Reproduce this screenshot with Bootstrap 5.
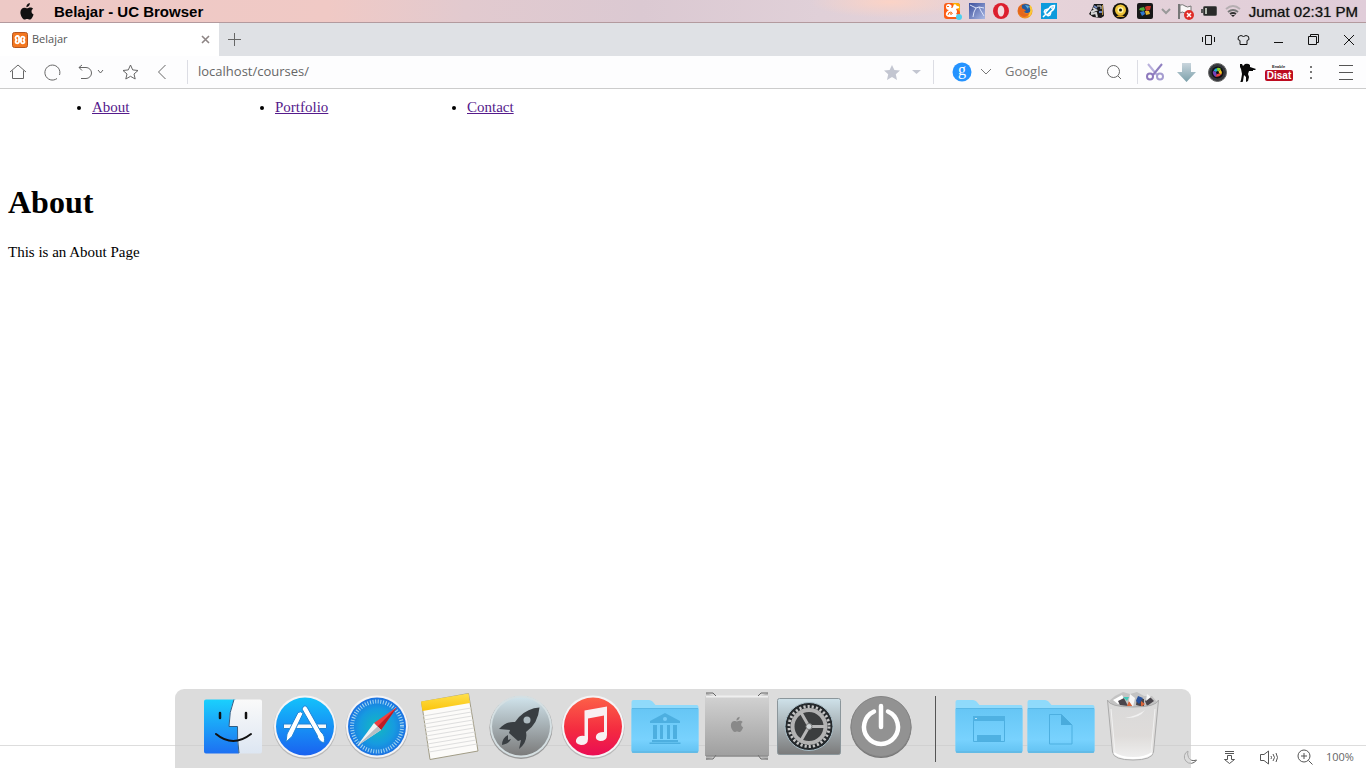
<!DOCTYPE html>
<html lang="id">
<head>
<meta charset="utf-8">
<meta name="viewport" content="width=device-width, initial-scale=1">
<title>Belajar</title>
<link rel="stylesheet" href="https://cdn.jsdelivr.net/npm/bootstrap@5.3.0/dist/css/bootstrap.min.css">
<style>
  body { font-family: "Open Sans", "Noto Sans", sans-serif; background: #fff; color: #555; }
  svg { display: block; flex: none; }
  .slot { display: flex; align-items: center; justify-content: center; flex: none; padding: 0; border: 0; background: none; color: #555; border-radius: 0; }
  .w-18 { width: 18px; } .w-20 { width: 20px; } .w-22 { width: 22px; } .w-24 { width: 24px; } .w-28 { width: 28px; }
  .w-30 { width: 30px; } .w-34 { width: 34px; } .w-40 { width: 40px; } .w-44 { width: 44px; }

  .menubar { height: 23px; border-bottom: 1px solid #b39a9e; font: 15px "Liberation Sans", sans-serif; color: #111;
    background: radial-gradient(ellipse 80px 16px at 890px 2px, #fbd3c6, #fbd3c600), linear-gradient(90deg, #edc9c6 0, #f0c9c5 24%, #e2cacf 34%, #dbc9d2 47%, #e0d0d8 60%, #e6d3d9 76%, #e0cdd9 100%); }
  .menubar .logo { color: #111; margin-left: 19px; }
  .menubar .title { color: #000; margin-left: 19px; }
  .menubar .clock { text-shadow: 0 0 1px #555; margin: 0 8px 0 4px; }

  .tabstrip { height: 33px; background: #dfe1e5; }
  .tab { width: 219px; height: 33px; background: #fff; padding: 0 5px 0 12px; font-size: 11px; }
  .winbtn { width: 35px; height: 33px; color: #111; }

  .toolbar { height: 33px; border-bottom: 1px solid #ccc; background: #fdfdfe; padding-left: 1px; }
  .sep { width: 1px; height: 24px; background: #dcdde4; flex: none; }
  .sep-address { margin: 0 10px; }
  .sep-search { margin: 0 13px 0 7px; }
  .field { border: 0; background: none; outline: 0; padding: 0; min-width: 0; font-size: 13px; color: #666; }
  .field::placeholder { color: #777; opacity: 1; }
  .search { width: 94px; margin-left: 10px; }

  .page { font-family: "Liberation Serif", serif; font-size: 15px; line-height: 18px; color: #000; padding: 9px 8px; }
  .page ul { display: grid; grid-template-columns: 183px 192px auto; padding-left: 84px; margin-bottom: 68px; }
  .page a { color: #551a8b; }
  .page h1 { font-size: 32px; font-weight: 700; line-height: 36px; margin-bottom: 23px; color: #000; }

  .status { height: 23px; border-top: 1px solid #ddd; font-size: 11px; }
  .status .action { width: 39px; }
  .status .zoom { width: 44px; text-align: left; padding: 0 0 0 4px; border: 0; background: none; color: #666; }

  .dock { background: rgba(204,204,204,.68); border-radius: 9px 9px 0 0; padding: 0 22px; height: 79px; }
  .dock .slot { width: 72px; height: 79px; }
  .dock .split { width: 36px; height: 79px; display: flex; align-items: center; justify-content: center; }
  .dock .split span { width: 1px; height: 66px; background: #555; }
</style>
</head>
<body class="d-flex flex-column min-vh-100 position-relative">
<svg width="0" height="0" class="position-absolute" aria-hidden="true">
  <defs>
    <linearGradient id="gFinder" x2="0" y2="1"><stop stop-color="#1ad0fd"/><stop offset="1" stop-color="#1d70f2"/></linearGradient>
    <linearGradient id="gFace" x2="0" y2="1"><stop stop-color="#fafafa"/><stop offset="1" stop-color="#dde6f2"/></linearGradient>
    <linearGradient id="gStore" x2="0" y2="1"><stop stop-color="#13c2fb"/><stop offset="1" stop-color="#1a62f0"/></linearGradient>
    <radialGradient id="gSafari"><stop stop-color="#12b9bf"/><stop offset=".6" stop-color="#169be0"/><stop offset="1" stop-color="#1c72e2"/></radialGradient>
    <linearGradient id="gYellow" x2="0" y2="1"><stop stop-color="#fee04c"/><stop offset="1" stop-color="#fbc40c"/></linearGradient>
    <linearGradient id="gSteel" x2="0" y2="1"><stop stop-color="#cfe2ea"/><stop offset="1" stop-color="#7b7b7b"/></linearGradient>
    <linearGradient id="gMusic" x2="0" y2="1"><stop stop-color="#fc6048"/><stop offset=".55" stop-color="#f42c40"/><stop offset="1" stop-color="#ea0d54"/></linearGradient>
    <linearGradient id="gFolder" x2="0" y2="1"><stop stop-color="#66c6f5"/><stop offset=".7" stop-color="#78d2fe"/><stop offset="1" stop-color="#62c2f2"/></linearGradient>
    <linearGradient id="gMac" x2="0" y2="1"><stop stop-color="#d2d2d2"/><stop offset="1" stop-color="#9f9f9f"/></linearGradient>
    <linearGradient id="gBin" x2="0" y2="1"><stop stop-color="#d9d9d9"/><stop offset=".6" stop-color="#dfdcda"/><stop offset="1" stop-color="#f2f2f2"/></linearGradient>
    <linearGradient id="gFox" x2="1" y2="1"><stop stop-color="#e0601c"/><stop offset="1" stop-color="#f7a325"/></linearGradient>
    <linearGradient id="gBolt" x2="1" y2="1"><stop stop-color="#3b4f9c"/><stop offset="1" stop-color="#aab8e4"/></linearGradient>
    <linearGradient id="gArrow" x2="0" y2="1"><stop stop-color="#c9d5dd"/><stop offset="1" stop-color="#7ba0aa"/></linearGradient>
    <symbol id="apple" viewBox="0 0 16 18"><path d="M11 0c.1 1.300-.4 2.400-1.100 3.200C9.200 4 8.200 4.500 7.400 4.400 7.300 3.300 7.800 2.200 8.500 1.400 9.100.7 10.200.1 11 0zM14.500 6.200C13.500 6.900 12.800 7.700 12.800 9.100c0 1.600.9 2.600 2.200 3.200-.4 1.200-1 2.400-1.800 3.500-.8 1.100-1.500 1.700-2.400 1.700-.9 0-1.400-.6-2.700-.6-1.200 0-1.800.6-2.700.6-.9 0-1.700-.8-2.500-1.900C1.700 13.900 1 12 1 9.900c0-3.300 2.100-5 4.200-5 1.200 0 2.100.7 2.900.7.700 0 1.900-.8 3.300-.8 1.200 0 2.400.5 3.100 1.400z" fill="currentColor"/></symbol>
    <symbol id="folder" viewBox="0 0 72 79"><path d="M2.500 62V13q0-2 2-2H20q2 0 3.500 1.500L26.500 16H67.500q2 0 2 2v44z" fill="#8fdafb"/><path d="M2.500 19.500h67V62q0 2-2 2h-63q-2 0-2-2z" fill="url(#gFolder)"/><path d="M3 19.500h66" stroke="#5ab8e6"/><path d="M3 63h66" stroke="#63b3da"/></symbol>
  </defs>
</svg>

<header class="menubar d-flex align-items-center">
  <div class="slot logo"><svg width="16" height="17"><use href="#apple"/></svg></div>
  <strong class="title">Belajar - UC Browser</strong>
  <div class="d-flex ms-auto" aria-label="Tray">
    <div class="slot w-24"><svg width="19" height="18" viewBox="0 0 19 18"><rect x="1" y="1" width="16" height="16" rx="3" fill="#fb5d16"/><path d="M9 1h5q3 0 3 3v6z" fill="#ffae00"/><path d="M6 15q-4-1-3-4 1-2 3-3-3 0-3-3 0-3 3-3 4 1 2 4 2 0 2-1 0-2 2-3l2 2q3 0 2 2l-3 1q2 3 0 5l2 1v2z" fill="#fff"/><path d="M5 13q0-3 3-3 2 1 1 2-2 1-2-1" stroke="#fb6d16" fill="none"/><path d="M4 5q1-2 2 0" stroke="#fb6d16" fill="none"/><circle cx="16" cy="15" r="3" fill="#4cd0ee"/></svg></div>
    <div class="slot w-24"><svg width="16" height="16"><rect width="16" height="16" fill="url(#gBolt)"/><path d="M1 2l6 3 3-1 2 4 3 5M7 5l-2 4-1 5M10 4l5 1" stroke="#dce4fb" fill="none"/></svg></div>
    <div class="slot w-24"><svg width="16" height="16"><circle cx="8" cy="8" r="8" fill="#dc1e2d"/><ellipse cx="8" cy="8" rx="3.300" ry="5.500" fill="#f1dcdf"/></svg></div>
    <div class="slot w-24"><svg width="16" height="16"><circle cx="8" cy="8" r="7.500" fill="url(#gFox)"/><path d="M5 2q6-3 9 2 1 5-3 6-5 0-4-3-3-1-2-5z" fill="#245a9e"/><path d="M8 2l4 1-1 3z" fill="#5bb0df"/><path d="M2 3l1 2 4 1 2 2-3 1q2 3 6 1 0 3-5 4-5-1-6-6z" fill="#e5661b"/><path d="M13 3q3 5-1 10" stroke="#fbc937" stroke-width="2" fill="none"/></svg></div>
    <div class="slot w-24"><svg width="16" height="16"><rect width="16" height="16" fill="#0c9bdc"/><path d="M13.500 2.500q-4 0-5.500 3L4 10l2 2 4.500-4q3-1.500 3-5.500zM7 6L4 7 3 9.500M10 9l-1 3-2.500 1M2 14l2.500-2.500" fill="none" stroke="#fff" stroke-width="1.500"/><circle cx="11" cy="5" r="1" fill="#fff"/></svg></div>
    <div class="slot w-24 ms-4"><svg width="16" height="16"><path d="M5 1h9l1 12-3 2-8-1-4-3 3-5z" fill="#191919"/><path d="M2 11l5-1 1 4M4 5l3 2-5 2" stroke="#d6d6d6" stroke-width="2" fill="none"/><path d="M8 3h4v3" stroke="#ddd" fill="none"/><path d="M10 9h4M5 3l3 2" stroke="#6c83bb" stroke-width="2"/><path d="M13.500 2v10" stroke="#b18e3c"/></svg></div>
    <div class="slot w-24"><svg width="17" height="16" viewBox="0 0 17 16"><circle cx="8.500" cy="8" r="8" fill="#15130c"/><circle cx="8.500" cy="7" r="5.500" fill="#efc438"/><circle cx="8.500" cy="7" r="3" fill="#fff2a1"/><circle cx="8.500" cy="7" r="1.500" fill="#111"/><path d="M4 14q4-4 9 0" fill="#d6a326"/></svg></div>
    <div class="slot w-24"><svg width="16" height="16"><rect width="16" height="16" rx="2" fill="#171717"/><path d="M2 7l1-2 4-1 1 3-2 1z" fill="#4faa36"/><path d="M8 4l2-1 4 0-1 4-4 1z" fill="#ca3527"/><path d="M3 9l4-1 1 3-3 2z" fill="#2f77cf"/><path d="M8 8l4 0 1 3-4 1z" fill="#e4b42c"/></svg></div>
    <div class="slot w-18"><svg width="10" height="8"><path d="M1 2l4 4 4-4" fill="none" stroke="#999" stroke-width="2"/></svg></div>
    <div class="slot w-22"><svg width="18" height="17"><path d="M2 1v15" stroke="#777" stroke-width="2"/><path d="M3 2q3-1 5 1t6 0v8q-3 1-6-1t-5 0z" fill="#faf7f7" stroke="#777"/><circle cx="12" cy="12" r="5" fill="#df2c27"/><path d="M10 10l4 4m0-4l-4 4" stroke="#fff" stroke-width="1.500"/></svg></div>
    <div class="slot w-24"><svg width="16" height="10"><rect x="2.500" y=".5" width="13" height="9" rx="1" fill="#292a29" stroke="#555"/><path d="M1 3v4" stroke="#555" stroke-width="2"/><path d="M4 2h2v6H4z" fill="#b6bdb2"/></svg></div>
    <div class="slot w-24"><svg width="16" height="14" viewBox="0 0 16 14" fill="none" stroke-width="2"><path d="M1 5q7-6 14 0" stroke="#b5aeb1"/><path d="M3 8q5-4 10 0" stroke="#777"/><path d="M5 10q3-2 6 0" stroke="#333"/><path d="M6 11h4l-2 2z" fill="#222" stroke="none"/></svg></div>
  </div>
  <div class="clock">Jumat 02:31 PM</div>
</header>

<div class="tabstrip d-flex align-items-center">
  <div class="tab d-flex align-items-center">
    <svg width="16" height="16"><rect x=".5" y=".5" width="15" height="15" rx="2" fill="#f4771f" stroke="#b55620"/><path d="M5.500 4A1.800 1.800 0 0 0 3.500 6q0 1 1 2-1 1-1 2a1.800 1.800 0 0 0 3.500 0V9h2v1a1.800 1.800 0 0 0 3.500 0q0-1-1-2 1-1 1-2A1.800 1.800 0 0 0 9 6v1H7V6a1.800 1.800 0 0 0-1.500-2z" fill="#f4771f" stroke="#fff" stroke-width="1.800"/></svg>
    <span class="ms-1">Belajar</span>
    <button class="slot w-18 ms-auto" aria-label="Tutup tab"><svg width="9" height="9"><path d="M1 1l7 7m0-7l-7 7" stroke="#8d8585" stroke-width="1.600"/></svg></button>
  </div>
  <button class="slot w-30" aria-label="Tab baru"><svg width="15" height="15"><path d="M7.500 1v13M1 7.500h13" stroke="#666"/></svg></button>
  <div class="d-flex ms-auto">
    <button class="slot winbtn" aria-label="Mode ponsel"><svg width="13" height="12" fill="none" stroke="currentColor"><path d="M.5 3v5M12.500 3v5M3.500 1.500h6v9h-6z"/></svg></button>
    <button class="slot winbtn" aria-label="Tema"><svg width="13" height="12" fill="none" stroke="currentColor"><path d="M4 1.500q2.500 2 5 0l2.500 1 .5 3-2 1v4h-7v-4l-2-1 .5-3z"/></svg></button>
    <button class="slot winbtn" aria-label="Kecilkan"><svg width="9" height="9"><path d="M0 7.500h9" stroke="currentColor"/></svg></button>
    <button class="slot winbtn" aria-label="Pulihkan"><svg width="11" height="11" fill="none" stroke="currentColor"><path d="M.5 2.500h8v8h-8zM2.500 2V.5h8v8H9"/></svg></button>
    <button class="slot winbtn" aria-label="Tutup"><svg width="12" height="12"><path d="M1 1l10 10m0-10L1 11" stroke="currentColor"/></svg></button>
  </div>
</div>

<nav class="toolbar d-flex align-items-center" aria-label="Navigasi">
  <button class="slot w-34" aria-label="Beranda"><svg width="18" height="18" fill="none" stroke="#666"><path d="M1 9l8-7 8 7M3.500 7.500v8h11v-8"/></svg></button>
  <button class="slot w-34" aria-label="Muat ulang"><svg width="17" height="17" fill="none" stroke="#666"><path d="M13 14.500A7.500 7.500 0 1 1 15.500 11"/></svg></button>
  <button class="slot w-44 gap-1" aria-label="Urungkan"><svg width="15" height="16" fill="none" stroke="#666"><path d="M4 1L1 3.500 4 6.500M1 3.500h7a5.500 5.500 0 0 1 0 11H3"/></svg><svg width="7" height="6" fill="none" stroke="#666"><path d="M1 1l2.500 3L6 1"/></svg></button>
  <button class="slot w-34" aria-label="Markah"><svg width="17" height="16" fill="none" stroke="#666"><path d="M8.500 1l2.200 4.900 5.300.6-4 3.500 1.200 5-4.700-2.700L3.800 15 5 10 1 6.500l5.300-.6z"/></svg></button>
  <button class="slot w-30" aria-label="Kembali"><svg width="10" height="16" fill="none" stroke="#666"><path d="M8.500 1L1.500 8l7 7"/></svg></button>
  <span class="sep sep-address"></span>
  <input class="field flex-grow-1" type="text" value="localhost/courses/" aria-label="Alamat">
  <button class="slot w-28" aria-label="Favorit"><svg width="16" height="15" fill="#c3c6d1"><path d="M8 0l2.400 5 5.600.6-4.200 3.700L13 15l-5-2.900L3 15l1.200-5.700L0 5.600 5.600 5z"/></svg></button>
  <button class="slot w-20" aria-label="Pilihan"><svg width="9" height="5" fill="#c3c6d1"><path d="M0 0h9L4.500 4z"/></svg></button>
  <span class="sep sep-search"></span>
  <div class="slot w-30"><svg width="20" height="24" viewBox="0 0 20 24"><circle cx="10" cy="12" r="9.500" fill="#2593ff"/><text x="10" y="15" text-anchor="middle" font-family="Liberation Serif, serif" font-size="16" fill="#fff">g</text></svg></div>
  <button class="slot w-18" aria-label="Mesin pencari"><svg width="12" height="8" fill="none" stroke="#777"><path d="M1 1l5 5 5-5"/></svg></button>
  <input class="field search" type="text" placeholder="Google" aria-label="Cari dengan Google">
  <button class="slot w-30" aria-label="Cari"><svg width="16" height="16" fill="none" stroke="#666"><circle cx="7.500" cy="7.500" r="6"/><path d="M12 12l3 3"/></svg></button>
  <span class="sep ms-2"></span>
  <button class="slot w-34" aria-label="Tangkapan layar"><svg width="18" height="18" viewBox="0 0 18 18" fill="none" stroke-width="2"><path d="M2 1l9 11" stroke="#b9b0dc"/><path d="M16 1L7 12" stroke="#8f7fc0"/><circle cx="4" cy="13.500" r="3" stroke="#8d79bd"/><circle cx="14" cy="13.500" r="3" stroke="#a59cd0"/></svg></button>
  <button class="slot w-28" aria-label="Unduh"><svg width="19" height="19" viewBox="0 0 19 19"><path d="M5 0h9v9h5l-9.500 10L0 9h5z" fill="url(#gArrow)"/></svg></button>
  <button class="slot w-34" aria-label="Kamera"><svg width="19" height="19" viewBox="0 0 19 19"><circle cx="9.500" cy="9.500" r="9" fill="#34363c" stroke="#666"/><circle cx="9.500" cy="9.500" r="6" fill="#101014"/><path d="M9.500 9.500V5a4.500 4.500 0 0 0-4 3z" fill="#20a7d5"/><path d="M9.500 9.500L13 6a4.500 4.500 0 0 0-4-1z" fill="#87d52d"/><path d="M9.500 9.500l4 2q1-3-1-5z" fill="#f2c321"/><path d="M9.500 9.500l-2 4q3 1 6-2z" fill="#e84242"/><path d="M9.500 9.500L5 8q-1 3 2.500 6z" fill="#7743bd"/><circle cx="9.500" cy="9.500" r="1.500" fill="#101014"/></svg></button>
  <button class="slot w-28" aria-label="Ninja"><svg width="18" height="19" viewBox="0 0 18 19"><path d="M1 1l2 0 1 2 2-2q3-1 5 1l0 2 3 1 3 1-1 1-2 0 0 1-4 0-1 3 1 3-1 4-2 1 0-5-2-2-1 6-1 2-2 0 1-3 1-6-1-5-1-2z" fill="#090909"/></svg></button>
  <button class="slot w-34" aria-label="Disable"><svg width="28" height="18" viewBox="0 0 28 18"><text x="7" y="5" font-family="Liberation Sans, sans-serif" font-size="4" font-weight="700" fill="#222">Enable</text><rect y="7" width="28" height="11" rx="2" fill="#bd0b20"/><text x="14" y="16" text-anchor="middle" font-family="Liberation Sans, sans-serif" font-size="10" font-weight="700" fill="#fff">Disat</text></svg></button>
  <button class="slot w-30" aria-label="Lainnya"><svg width="3" height="15" fill="#777"><path d="M0 1h2v2H0zM0 6h2v2H0zM0 12h2v2H0z"/></svg></button>
  <button class="slot w-40" aria-label="Menu"><svg width="14" height="16" stroke="#555"><path d="M0 1.500h14M0 8.500h14M0 15.500h14"/></svg></button>
</nav>

<main class="page flex-grow-1">
  <ul>
    <li><a href="#about">About</a></li>
    <li><a href="#portfolio">Portfolio</a></li>
    <li><a href="#contact">Contact</a></li>
  </ul>
  <h1 id="about">About</h1>
  <p class="mb-0">This is an About Page</p>
</main>

<footer class="status d-flex align-items-center justify-content-end">
  <button class="slot action" aria-label="Mode malam"><svg width="15" height="15" fill="none" stroke="#666"><path d="M5 1A6.500 6.500 0 1 0 13.500 10Q8 12 5.500 7.500 4 4 5 1z"/></svg></button>
  <button class="slot action" aria-label="Unduhan"><svg width="13" height="15" fill="none" stroke="#555"><path d="M2 1.500h9M2 3.500h9M4.500 5.500h4v4h3l-5 4-5-4h3z"/></svg></button>
  <button class="slot action" aria-label="Suara"><svg width="20" height="15" fill="none" stroke="#555"><path d="M1.500 4.500H5L9.500 1v13L5 10.500H1.500zM12 6q1 1.500 0 3M14 4q3 3.500 0 7M17 3q3 4.500 0 9"/></svg></button>
  <button class="slot w-34" aria-label="Perbesar"><svg width="16" height="16" fill="none" stroke="#555"><circle cx="7" cy="7" r="6"/><path d="M7 4v6M4 7h6M11.500 11.500l4 4"/></svg></button>
  <button class="zoom">100%</button>
</footer>

<nav class="dock d-flex position-absolute bottom-0 start-50 translate-middle-x" aria-label="Dock">
  <a href="#" class="slot" aria-label="Finder"><svg width="72" height="79"><path d="M9 10.500H39Q32 25 32 38h8q0 15 2 26.500H9q-2 0-2-2v-50q0-2 2-2z" fill="url(#gFinder)"/><path d="M37 10.500H63q2 0 2 2v50q0 2-2 2H42Q40 50 40.500 37.500H32Q32 23 37 10.500z" fill="url(#gFace)"/><path d="M37 10.500Q32 23 32 37.500h8.500Q40 50 42 64" fill="none" stroke="#315d86"/><path d="M23 24v5M49 24v5" stroke="#111" stroke-width="2.500" stroke-linecap="round"/><path d="M19 45q17 14 35 0" fill="none" stroke="#111" stroke-width="2" stroke-linecap="round"/></svg></a>
  <a href="#" class="slot" aria-label="App Store"><svg width="72" height="79"><circle cx="36" cy="38.500" r="31.500" fill="#b9b9b9"/><circle cx="36" cy="37.500" r="31" fill="#f4f4f6"/><circle cx="36" cy="37.500" r="29" fill="url(#gStore)"/><path d="M14.500 35h43v4.500h-43z" fill="#f8f8fa" stroke="#2084d6"/><path d="M29 23.500q3-2 5 1L23 47.500l-6 5.500 1-8z" fill="#fff" stroke="#2084d6"/><path d="M33 20q2-5 5-2l14 25q5 4 3 11-6-2-7-8z" fill="#fff" stroke="#2084d6"/></svg></a>
  <a href="#" class="slot" aria-label="Safari"><svg width="72" height="79"><circle cx="36" cy="38.500" r="31.500" fill="#b9b9b9"/><circle cx="36" cy="37.500" r="31" fill="#f4f4f6"/><circle cx="36" cy="37.500" r="29" fill="url(#gSafari)"/><circle cx="36" cy="37.500" r="25" fill="none" stroke="#a5d6f2" stroke-width="4" stroke-dasharray="1 1.618"/><path d="M56 18L33 34l7 7z" fill="#f03e3e"/><path d="M56 18L36.500 37.500 40 41z" fill="#bd1d24"/><path d="M16 57l17-23 7 7z" fill="#f3f3f3"/><path d="M16 57l20.500-19.500L40 41z" fill="#b7bfc5"/></svg></a>
  <a href="#" class="slot" aria-label="Catatan"><svg width="72" height="79"><path d="M8.500 13l47-8.500L65 62l-48 8.500z" fill="#fcfbf9" stroke="#a19c86"/><path d="M10 27l48-8M10.500 31l48-8M11 35l48-8M12 39l48-8M12.500 43l48-8M13 47l48-8M14 51l48-8M14.500 55l48-8M15 59l48-8M16 63l48-8" stroke="#dedede"/><path d="M8 12.500l47.500-8L57 14 9.500 22z" fill="url(#gYellow)"/></svg></a>
  <a href="#" class="slot" aria-label="Launchpad"><svg width="72" height="79"><circle cx="36" cy="38.500" r="31.500" fill="#999"/><circle cx="36" cy="37.500" r="31" fill="#d5dfe2"/><circle cx="36" cy="37.500" r="29" fill="url(#gSteel)"/><path d="M54.500 18.500Q43 19 34 28l-4 5q-9-1-16 7l11 1-1 3 9 8 3-1-2 9q9-7 7-17 12-8 13.500-24.500zM23 46q-6 3-6 10 7-1 9-6l-3 1z" fill="#393e42"/><circle cx="42" cy="31" r="3.500" fill="#adbac0"/></svg></a>
  <a href="#" class="slot" aria-label="Musik"><svg width="72" height="79"><circle cx="36" cy="38.500" r="31.500" fill="#b9b9b9"/><circle cx="36" cy="37.500" r="31" fill="#f4f4f6"/><circle cx="36" cy="37.500" r="29" fill="url(#gMusic)"/><path d="M27.500 21.500L50 17.500V46q0 6-7 6-5-1-4-5 1-4 8-4V26.500l-16 3V50q0 6-7 6-6-1-5-5 2-5 8.500-4z" fill="#f8f0f2"/></svg></a>
  <a href="#" class="slot" aria-label="Pustaka"><svg width="72" height="79"><use href="#folder"/><path d="M36 24l15 8v2H21v-2zM24 36h4v14h-4zM31 36h3v14h-3zM38 36h3v14h-3zM44 36h4v14h-4zM23 51h26v2H23zM20.500 53.500h31V55h-31z" fill="#4dafe0"/><circle cx="36" cy="30" r="2" fill="#76cdf8"/></svg></a>
  <a href="#" class="slot" aria-label="Komputer"><svg width="72" height="79"><path d="M5 4l8 3h46l8-3v67l-8-3H13l-8 3z" fill="#b5b5b5"/><path d="M4 7h64v60H4z" fill="url(#gMac)"/><path d="M5 7.500h62" stroke="#efefef" stroke-width="2"/><path d="M5 4h7l3 3M67 4h-7l-3 3M5 70h7l3-4M67 70h-7l-3-4" stroke="#666" fill="none"/><path d="M5 67h62" stroke="#858585"/><svg x="29" y="27" width="14" height="17" color="#898989"><use href="#apple"/></svg></svg></a>
  <a href="#" class="slot" aria-label="Pengaturan"><svg width="72" height="79"><rect x="4.500" y="9.500" width="63" height="56" rx="2" fill="url(#gSteel)" stroke="#8b969b"/><circle cx="36" cy="37.500" r="24" fill="#25292c" stroke="#abc0ca"/><circle cx="36" cy="37.500" r="20" fill="none" stroke="#c4c4c4" stroke-width="3" stroke-dasharray="2.200 1.990"/><circle cx="36" cy="37.500" r="16.500" fill="#3c3e3f" stroke="#b2b2b2" stroke-width="4"/><path d="M36 37.500h16M36 37.500l-8-14M36 37.500l-8 14" stroke="#b7b7b7" stroke-width="3"/><circle cx="36" cy="37.500" r="3" fill="#d0d5d7" stroke="#777"/></svg></a>
  <a href="#" class="slot" aria-label="Matikan"><svg width="72" height="79"><circle cx="36" cy="38.500" r="30.500" fill="#777"/><circle cx="36" cy="37.500" r="30" fill="#929292" stroke="#858585"/><path d="M29 22.500a17 17 0 1 0 14 0M36 17v21" fill="none" stroke="#fff" stroke-width="4.500" stroke-linecap="round"/></svg></a>
  <div class="split"><span></span></div>
  <a href="#" class="slot" aria-label="Desktop"><svg width="72" height="79"><use href="#folder"/><path d="M20.500 27.500h31v25h-31z" fill="none" stroke="#4dafe0"/><path d="M20 27h32v5H20zM24 46h24v6H24z" fill="#4fb1e2"/><path d="M22 29h2v1h-2z" fill="#b6e4fa"/></svg></a>
  <a href="#" class="slot" aria-label="Dokumen"><svg width="72" height="79"><use href="#folder"/><path d="M24.500 25.500h12L47 36v19H24.500z" fill="none" stroke="#4dafe0"/><path d="M36 25l11 11H36z" fill="#4aabdc"/></svg></a>
  <a href="#" class="slot" aria-label="Tempat sampah"><svg width="72" height="79"><path d="M12 12l6-5 8-4 7 2 7-2 7 4 8 0 5 6-5 5H17z" fill="#c3c3c3"/><path d="M16 11l9-5 3 5-7 4z" fill="#fff"/><path d="M21 12l6-3 4 8-8-1zM40 9l7 1 0 8-8-2zM48 12l5-4 4 4-7 5z" fill="#49454b"/><path d="M26 8l6 0-2 4z" fill="#43c9ba"/><path d="M41 7l5 2-4 6-3-3z" fill="#28529e"/><path d="M32 12l4 5-6 0zM44 12l4 3-4 3z" fill="#d8653a"/><path d="M33 5l5 4-2 9-4-6zM50 5l4 3-5 4z" fill="#f6f6f6"/><path d="M10.500 11q2 7 25.500 7t25.500-7L56.500 63q-1 8-20.500 8t-20.500-8z" fill="url(#gBin)" fill-opacity=".94" stroke="#aaa"/><path d="M28 29q14 1 20-8-6 5-20 8z" fill="#f1f1f1"/><path d="M14 20l4 43M58 20l-4 43" stroke="#f1f1f1"/><path d="M17 64q6 5 19 5t19-5" stroke="#fff" stroke-width="2" fill="none"/></svg></a>
</nav>
<script src="https://cdn.jsdelivr.net/npm/bootstrap@5.3.0/dist/js/bootstrap.bundle.min.js"></script>
</body>
</html>
